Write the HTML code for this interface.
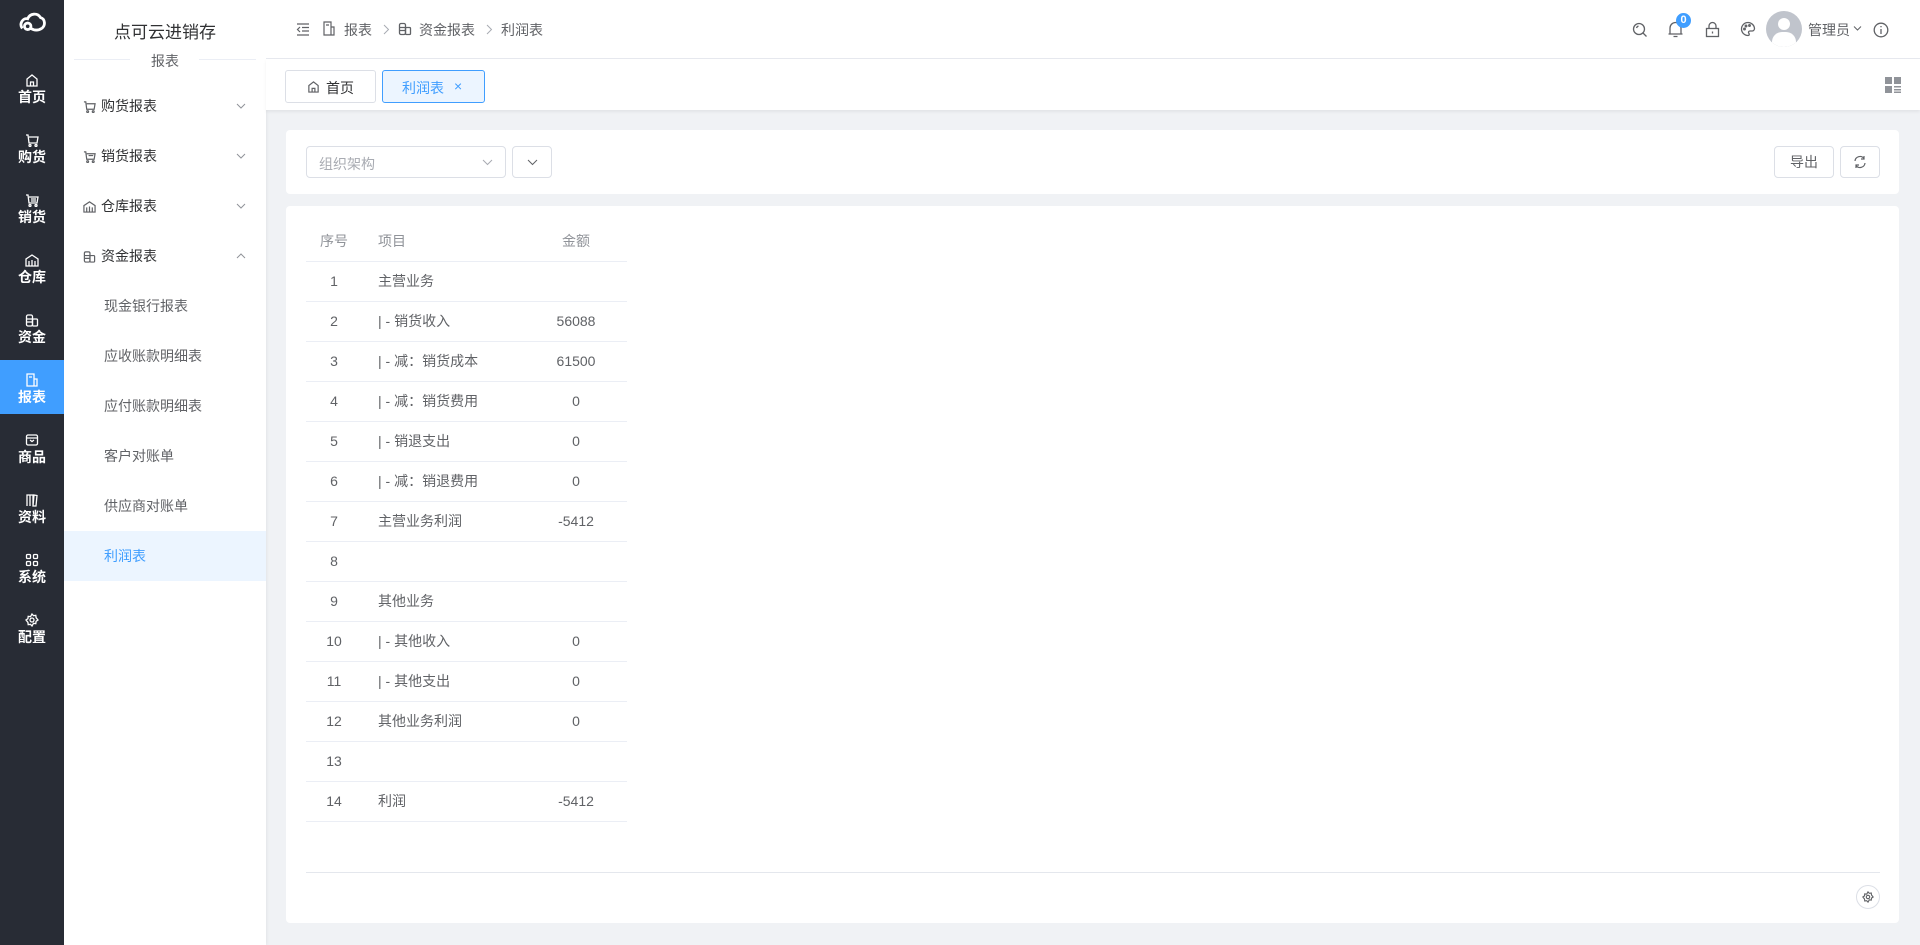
<!DOCTYPE html>
<html><head><meta charset="utf-8"><style>
*{margin:0;padding:0;box-sizing:border-box}
body{width:1920px;height:945px;overflow:hidden;font-family:"Liberation Sans","Noto Sans CJK SC",sans-serif;font-size:14px;color:#606266;background:#f0f2f5;position:relative}
.abs{position:absolute}
#dark{left:0;top:0;width:64px;height:945px;background:#282c35}
.di{position:absolute;left:0;width:64px;height:54px;color:#fff;text-align:center}
.di svg{position:absolute;left:25px;top:13px}
.di span{position:absolute;left:0;right:0;top:28px;font-size:14px;line-height:18px;font-weight:bold}
.di.on{background:#409eff}
#side{left:64px;top:0;width:202px;height:945px;background:#fff;box-shadow:1px 0 3px rgba(0,0,0,.06)}
.mi{position:absolute;left:0;width:202px;height:50px;line-height:50px;font-size:14px;color:#303133}
.mi svg{position:absolute;left:19px;top:19px}
.mi .t{position:absolute;left:37px}
.mi .ch{position:absolute;left:172px;top:21px}
.si{position:absolute;left:0;width:202px;height:50px;line-height:50px;padding-left:40px;color:#606266}
#head{left:266px;top:0;width:1654px;height:59px;background:#fff;border-bottom:1px solid #e6e9ef}
#tabs{left:266px;top:59px;width:1654px;height:51px;background:#fff;box-shadow:0 2px 3px rgba(0,0,0,.06)}
.card{position:absolute;background:#fff;border-radius:4px}
.btn{position:absolute;border:1px solid #dcdfe6;border-radius:4px;background:#fff;text-align:center}
table{border-collapse:collapse;position:absolute;left:306px;top:221px;width:321px}
td,th{height:40px;border-bottom:1px solid #ebeef5;font-weight:normal;font-size:14px}
th{color:#909399;font-weight:normal}
td.c,th.c{text-align:center}
td.l,th.l{text-align:left;padding-left:16px}
</style></head><body>
<div id="dark" class="abs">
<svg class="abs" style="left:18px;top:10px" width="28" height="24" viewBox="0 0 26 22" fill="none" stroke="#fff" stroke-width="2.6"><path d="M4 17c-3-4 0-10 5-9 2-5 9-6 12-1 4 1 5 7 1 10"/><circle cx="9" cy="15" r="3"/><path d="M12 17c3 2 7 2 10 0"/></svg>
<div class="di" style="top:60px"><svg width="14" height="14" viewBox="0 0 14 14" fill="none" stroke="#fff" stroke-width="1.3"><path d="M2 13V6l5-4 5 4v7zM5.5 13V9h3v4"/></svg><span>首页</span></div>
<div class="di" style="top:120px"><svg width="14" height="14" viewBox="0 0 14 14" fill="none" stroke="#fff" stroke-width="1.3"><path d="M1 2h2l1 8h8l1-6H4"/><circle cx="5" cy="12.5" r="1"/><circle cx="11" cy="12.5" r="1"/></svg><span>购货</span></div>
<div class="di" style="top:180px"><svg width="14" height="14" viewBox="0 0 14 14" fill="none" stroke="#fff" stroke-width="1.3"><path d="M1 2h2l1 8h8l1-6H4M6 6h5M6 8h5"/><circle cx="5" cy="12.5" r="1"/><circle cx="11" cy="12.5" r="1"/></svg><span>销货</span></div>
<div class="di" style="top:240px"><svg width="14" height="14" viewBox="0 0 14 14" fill="none" stroke="#fff" stroke-width="1.3"><path d="M1 13V6l6-4 6 4v7zM4 13V8M7 13V7M10 13V8"/></svg><span>仓库</span></div>
<div class="di" style="top:300px"><svg width="14" height="14" viewBox="0 0 14 14" fill="none" stroke="#fff" stroke-width="1.3"><rect x="1.5" y="2" width="6" height="11" rx="1.5"/><rect x="7.5" y="6" width="5" height="7" rx="1"/><path d="M1.5 6h6M1.5 9h6"/></svg><span>资金</span></div>
<div class="di on" style="top:360px"><svg width="14" height="14" viewBox="0 0 14 14" fill="none" stroke="#fff" stroke-width="1.3"><path d="M2 1h7v12H2zM9 6h3v7H9M4 4h3"/></svg><span>报表</span></div>
<div class="di" style="top:420px"><svg width="14" height="14" viewBox="0 0 14 14" fill="none" stroke="#fff" stroke-width="1.3"><rect x="1.5" y="2" width="11" height="10" rx="1.5"/><path d="M1.5 5h11M5 7l2 1.5L9 7"/></svg><span>商品</span></div>
<div class="di" style="top:480px"><svg width="14" height="14" viewBox="0 0 14 14" fill="none" stroke="#fff" stroke-width="1.3"><path d="M2 13V2h3v11M5 13V2h3v11M8 13l1-11 3 .5-1 10.5z"/></svg><span>资料</span></div>
<div class="di" style="top:540px"><svg width="14" height="14" viewBox="0 0 14 14" fill="none" stroke="#fff" stroke-width="1.3"><rect x="1.5" y="1.5" width="4" height="4" rx="1"/><rect x="8.5" y="1.5" width="4" height="4" rx="1"/><rect x="1.5" y="8.5" width="4" height="4" rx="1"/><rect x="8.5" y="8.5" width="4" height="4" rx="1"/></svg><span>系统</span></div>
<div class="di" style="top:600px"><svg width="14" height="14" viewBox="0 0 14 14" fill="none" stroke="#fff" stroke-width="1.3"><path d="M7 1l1.5 1.7 2.3-.3.3 2.3L13 7l-1.9 1.3-.3 2.3-2.3-.3L7 13l-1.5-1.7-2.3.3-.3-2.3L1 7l1.9-1.3.3-2.3 2.3.3z"/><circle cx="7" cy="7" r="2"/></svg><span>配置</span></div>
</div>

<div id="side" class="abs">
<div class="abs" style="left:0;width:202px;top:18px;text-align:center;font-size:17px;color:#303133">点可云进销存</div>
<div class="abs" style="left:10px;top:59px;width:56px;height:1px;background:#ebeef5"></div>
<div class="abs" style="left:135px;top:59px;width:57px;height:1px;background:#ebeef5"></div>
<div class="abs" style="left:0;width:202px;top:51px;text-align:center;color:#606266">报表</div>
<div class="mi" style="top:81px"><svg width="13" height="13" viewBox="0 0 14 14" fill="none" stroke="#606266" stroke-width="1.3"><path d="M1 2h2l1 8h8l1-6H4"/><circle cx="5" cy="12.5" r="1"/><circle cx="11" cy="12.5" r="1"/></svg><span class="t">购货报表</span><svg class="ch" width="10" height="8" viewBox="0 0 10 8" fill="none" stroke="#909399" stroke-width="1"><path d="M1 2l4 4 4-4"/></svg></div>
<div class="mi" style="top:131px"><svg width="13" height="13" viewBox="0 0 14 14" fill="none" stroke="#606266" stroke-width="1.3"><path d="M1 2h2l1 8h8l1-6H4M6 6h5"/><circle cx="5" cy="12.5" r="1"/><circle cx="11" cy="12.5" r="1"/></svg><span class="t">销货报表</span><svg class="ch" width="10" height="8" viewBox="0 0 10 8" fill="none" stroke="#909399" stroke-width="1"><path d="M1 2l4 4 4-4"/></svg></div>
<div class="mi" style="top:181px"><svg width="13" height="13" viewBox="0 0 14 14" fill="none" stroke="#606266" stroke-width="1.3"><path d="M1 13V6l6-4 6 4v7zM4 13V8M7 13V7M10 13V8"/></svg><span class="t">仓库报表</span><svg class="ch" width="10" height="8" viewBox="0 0 10 8" fill="none" stroke="#909399" stroke-width="1"><path d="M1 2l4 4 4-4"/></svg></div>
<div class="mi" style="top:231px"><svg width="13" height="13" viewBox="0 0 14 14" fill="none" stroke="#606266" stroke-width="1.3"><rect x="1.5" y="2" width="6" height="11" rx="1.5"/><rect x="7.5" y="6" width="5" height="7" rx="1"/><path d="M1.5 6h6M1.5 9h6"/></svg><span class="t">资金报表</span><svg class="ch" width="10" height="8" viewBox="0 0 10 8" fill="none" stroke="#909399" stroke-width="1"><path d="M1 6l4-4 4 4"/></svg></div>
<div class="si" style="top:281px">现金银行报表</div>
<div class="si" style="top:331px">应收账款明细表</div>
<div class="si" style="top:381px">应付账款明细表</div>
<div class="si" style="top:431px">客户对账单</div>
<div class="si" style="top:481px">供应商对账单</div>
<div class="si" style="top:531px;background:#ecf5ff;color:#409eff">利润表</div>
</div>

<div id="head" class="abs">
<svg class="abs" style="left:30px;top:23px" width="14" height="13" viewBox="0 0 14 13" fill="none" stroke="#606266" stroke-width="1.2"><path d="M1 1h12M6 4.5h7M6 8h7M1 12h12M4 4L1.5 6.5 4 9"/></svg>
<svg class="abs" style="left:56px;top:21px" width="14" height="15" viewBox="0 0 14 15" fill="none" stroke="#606266" stroke-width="1.2"><path d="M2 1h7v13H2zM9 6h3v8H9M4 4h3"/></svg>
<span class="abs" style="left:78px;top:20px;color:#606266">报表</span>
<svg class="abs" style="left:117px;top:24px" width="7" height="11" viewBox="0 0 7 11" fill="none" stroke="#a8abb2" stroke-width="1"><path d="M1 1l4.5 4.5L1 10"/></svg>
<svg class="abs" style="left:132px;top:21px" width="14" height="15" viewBox="0 0 14 14" fill="none" stroke="#606266" stroke-width="1.3"><rect x="1.5" y="2" width="6" height="11" rx="1.5"/><rect x="7.5" y="6" width="5" height="7" rx="1"/><path d="M1.5 6h6M1.5 9h6"/></svg>
<span class="abs" style="left:153px;top:20px;color:#606266">资金报表</span>
<svg class="abs" style="left:220px;top:24px" width="7" height="11" viewBox="0 0 7 11" fill="none" stroke="#a8abb2" stroke-width="1"><path d="M1 1l4.5 4.5L1 10"/></svg>
<span class="abs" style="left:235px;top:20px;color:#606266">利润表</span>
<svg class="abs" style="left:1366px;top:22px" width="16" height="16" viewBox="0 0 16 16" fill="none" stroke="#606266" stroke-width="1.3"><circle cx="7" cy="7" r="5.5"/><path d="M11 11l3.5 3.5M4.5 6a3 3 0 0 1 2-2"/></svg>
<svg class="abs" style="left:1402px;top:21px" width="15" height="17" viewBox="0 0 15 17" fill="none" stroke="#606266" stroke-width="1.3"><path d="M2 13V7a5.5 5.5 0 0 1 11 0v6zM0.5 13h14M5.5 15.5h4"/></svg>
<div class="abs" style="left:1410px;top:13px;width:15px;height:15px;border-radius:8px;background:#409eff;color:#fff;font-size:11px;line-height:15px;text-align:center;font-weight:bold">0</div>
<svg class="abs" style="left:1439px;top:21px" width="15" height="17" viewBox="0 0 15 17" fill="none" stroke="#606266" stroke-width="1.3"><rect x="1.5" y="7.5" width="12" height="8"/><path d="M4 7.5V5a3.5 3.5 0 0 1 7 0v2.5M7.5 10.5v2"/></svg>
<svg class="abs" style="left:1474px;top:21px" width="16" height="16" viewBox="0 0 16 16" fill="none" stroke="#606266" stroke-width="1.3"><path d="M8 1.5a6.5 6.5 0 1 0 0 13c1.5 0 1.5-1.5.8-2.3-.8-1 0-2.2 1.2-2.2h2A2.5 2.5 0 0 0 14.5 7.5 6.5 6.5 0 0 0 8 1.5z"/><circle cx="4.5" cy="8" r=".8"/><circle cx="6" cy="5" r=".8"/><circle cx="9.5" cy="4.5" r=".8"/></svg>
<div class="abs" style="left:1500px;top:11px;width:36px;height:36px;border-radius:18px;background:#c0c4cc;overflow:hidden"><div class="abs" style="left:12px;top:7px;width:12px;height:12px;border-radius:6px;background:#fff"></div><div class="abs" style="left:6px;top:21px;width:24px;height:20px;border-radius:10px 10px 0 0;background:#fff"></div></div>
<span class="abs" style="left:1542px;top:20px;color:#606266">管理员</span>
<svg class="abs" style="left:1587px;top:25px" width="9" height="7" viewBox="0 0 9 7" fill="none" stroke="#606266" stroke-width="1"><path d="M1 1.5l3.5 3.5L8 1.5"/></svg>
<svg class="abs" style="left:1607px;top:22px" width="16" height="16" viewBox="0 0 16 16" fill="none" stroke="#606266" stroke-width="1.3"><circle cx="8" cy="8" r="6.8"/><path d="M8 7v5M8 4v1.3"/></svg>
</div>

<div id="tabs" class="abs">
<div class="abs" style="left:19px;top:11px;width:91px;height:33px;border:1px solid #dcdfe6;border-radius:3px;background:#fff"><svg class="abs" style="left:21px;top:9px" width="13" height="13" viewBox="0 0 14 14" fill="none" stroke="#606266" stroke-width="1.3"><path d="M2 13V6l5-4 5 4v7zM5.5 13V9h3v4"/></svg><span class="abs" style="left:40px;top:7px;color:#303133">首页</span></div>
<div class="abs" style="left:116px;top:11px;width:103px;height:33px;border:1px solid #409eff;border-radius:3px;background:#ecf5ff"><span class="abs" style="left:19px;top:7px;color:#409eff">利润表</span><span class="abs" style="left:71px;top:7px;color:#409eff;font-size:14px">×</span></div>
<svg class="abs" style="left:1619px;top:18px" width="16" height="16" viewBox="0 0 16 16" fill="#909399"><rect x="0" y="0" width="7" height="7"/><rect x="9" y="0" width="7" height="7"/><rect x="0" y="9" width="7" height="7"/><rect x="9" y="9" width="7" height="1.5"/><rect x="9" y="12" width="7" height="1.5"/><rect x="9" y="14.5" width="7" height="1.5"/></svg>
</div>

<div class="card" style="left:286px;top:130px;width:1613px;height:64px"></div>
<div class="abs" style="left:306px;top:146px;width:200px;height:32px;border:1px solid #dcdfe6;border-radius:4px;background:#fff"><span class="abs" style="left:12px;top:7px;color:#a8abb2">组织架构</span><svg class="abs" style="left:175px;top:12px" width="11" height="7" viewBox="0 0 11 7" fill="none" stroke="#a8abb2" stroke-width="1"><path d="M1 1l4.5 4.5L10 1"/></svg></div>
<div class="btn" style="left:512px;top:146px;width:40px;height:32px"><svg style="margin-top:12px" width="11" height="7" viewBox="0 0 11 7" fill="none" stroke="#606266" stroke-width="1"><path d="M1 1l4.5 4.5L10 1"/></svg></div>
<div class="btn" style="left:1774px;top:146px;width:60px;height:32px;line-height:30px;color:#606266">导出</div>
<div class="btn" style="left:1840px;top:146px;width:40px;height:32px"><svg style="margin-top:8px" width="14" height="14" viewBox="0 0 14 14" fill="none" stroke="#606266" stroke-width="1.2"><path d="M2 6a5 5 0 0 1 9-2.5M12 8a5 5 0 0 1-9 2.5M11 1v3H8M3 13v-3h3"/></svg></div>

<div class="card" style="left:286px;top:206px;width:1613px;height:717px"></div>
<table>
<tr><th class="c" style="width:56px">序号</th><th class="l">项目</th><th class="c" style="width:102px">金额</th></tr>
<tr><td class="c">1</td><td class="l">主营业务</td><td class="c"></td></tr>
<tr><td class="c">2</td><td class="l">| - 销货收入</td><td class="c">56088</td></tr>
<tr><td class="c">3</td><td class="l">| - 减：销货成本</td><td class="c">61500</td></tr>
<tr><td class="c">4</td><td class="l">| - 减：销货费用</td><td class="c">0</td></tr>
<tr><td class="c">5</td><td class="l">| - 销退支出</td><td class="c">0</td></tr>
<tr><td class="c">6</td><td class="l">| - 减：销退费用</td><td class="c">0</td></tr>
<tr><td class="c">7</td><td class="l">主营业务利润</td><td class="c">-5412</td></tr>
<tr><td class="c">8</td><td class="l"></td><td class="c"></td></tr>
<tr><td class="c">9</td><td class="l">其他业务</td><td class="c"></td></tr>
<tr><td class="c">10</td><td class="l">| - 其他收入</td><td class="c">0</td></tr>
<tr><td class="c">11</td><td class="l">| - 其他支出</td><td class="c">0</td></tr>
<tr><td class="c">12</td><td class="l">其他业务利润</td><td class="c">0</td></tr>
<tr><td class="c">13</td><td class="l"></td><td class="c"></td></tr>
<tr><td class="c">14</td><td class="l">利润</td><td class="c">-5412</td></tr>
</table>
<div class="abs" style="left:306px;top:872px;width:1574px;height:1px;background:#e4e7ed"></div>
<div class="abs" style="left:1856px;top:885px;width:24px;height:24px;border-radius:12px;border:1px solid #dcdfe6"><svg class="abs" style="left:5px;top:5px" width="12" height="12" viewBox="0 0 14 14" fill="none" stroke="#606266" stroke-width="1.3"><path d="M7 1l1.5 1.7 2.3-.3.3 2.3L13 7l-1.9 1.3-.3 2.3-2.3-.3L7 13l-1.5-1.7-2.3.3-.3-2.3L1 7l1.9-1.3.3-2.3 2.3.3z"/><circle cx="7" cy="7" r="2"/></svg></div>
</body></html>
